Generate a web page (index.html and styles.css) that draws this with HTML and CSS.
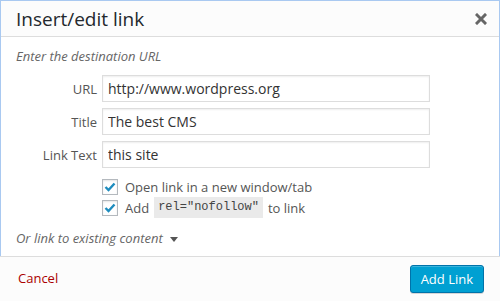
FILE: index.html
```html
<!DOCTYPE html>
<html lang="en">
<head>
    <meta charset="UTF-8">
    <title>Insert/edit link</title>
    <link rel="stylesheet" href="styles.css">
</head>
<body>
    <div class="link-modal">
        <div class="modal-main">
            <div class="modal-header">
                <h1 class="modal-title">Insert/edit link</h1>
                <button class="close-button" aria-label="Close">
                    <svg width="12" height="12" viewBox="0 0 12 12">
                        <path d="M2 2 L10 10 M10 2 L2 10" stroke="#666" stroke-width="3" stroke-linecap="square"/>
                    </svg>
                </button>
            </div>

            <div class="modal-body">
                <p class="howto">Enter the destination URL</p>

                <div class="field-row">
                    <label class="field-label">URL</label>
                    <input class="field-input" type="text" value="http://www.wordpress.org">
                </div>
                <div class="field-row">
                    <label class="field-label">Title</label>
                    <input class="field-input" type="text" value="The best CMS">
                </div>
                <div class="field-row">
                    <label class="field-label">Link Text</label>
                    <input class="field-input" type="text" value="this site">
                </div>

                <div class="options">
                    <label class="check-row">
                        <span class="checkbox"><svg width="12" height="10" viewBox="0 0 12 10"><path d="M1.5 5 L4.5 8 L10.5 1.5" fill="none" stroke="#1e8cbe" stroke-width="2.4"/></svg></span>
                        Open link in a new window/tab
                    </label>
                    <label class="check-row">
                        <span class="checkbox"><svg width="12" height="10" viewBox="0 0 12 10"><path d="M1.5 5 L4.5 8 L10.5 1.5" fill="none" stroke="#1e8cbe" stroke-width="2.4"/></svg></span>
                        Add <code class="code">rel="nofollow"</code> to link
                    </label>
                </div>

                <p class="toggle-existing">Or link to existing content <span class="arrow"></span></p>
            </div>
        </div>

        <div class="modal-footer">
            <a class="cancel-link" href="#">Cancel</a>
            <button class="submit-button">Add Link</button>
        </div>
    </div>
</body>
</html>
```

FILE: styles.css
```css
body {
    margin: 0;
    font-family: "Open Sans", "Liberation Sans", sans-serif;
    color: #444;
    background: #fff;
}

.link-modal {
    width: 500px;
    height: 301px;
    display: flex;
    flex-direction: column;
    box-sizing: border-box;
}

.modal-main {
    border: 1px solid #a9c9f1;
    border-bottom: none;
}

.modal-header {
    height: 35px;
    display: flex;
    align-items: center;
    justify-content: space-between;
    padding: 0 11px 0 15px;
    background-color: #fcfcfc;
    border-bottom: 1px solid #dddddd;
}

.modal-title {
    margin: 0;
    font-size: 19px;
    font-weight: 400;
    color: #23282d;
}

.close-button {
    background: none;
    border: none;
    padding: 0;
    width: 14px;
    height: 14px;
    display: flex;
    align-items: center;
    justify-content: center;
    cursor: pointer;
}

.modal-body {
    height: 219px;
    box-sizing: border-box;
    padding: 10px 15px 0;
    background: #fff;
}

.howto {
    margin: 0 0 10px;
    font-size: 13px;
    font-style: italic;
    color: #666;
    line-height: 18px;
}

.field-row {
    display: flex;
    align-items: center;
    margin-bottom: 6px;
}

.field-label {
    width: 81px;
    text-align: right;
    padding-right: 5px;
    font-size: 13px;
    color: #555;
}

.field-input {
    width: 328px;
    height: 27px;
    box-sizing: border-box;
    border: 1px solid #dddddd;
    padding: 0 5px;
    font-family: "Open Sans", "Liberation Sans", sans-serif;
    font-size: 14px;
    color: #333;
    box-shadow: inset 0 1px 2px rgba(0, 0, 0, 0.07);
    outline: none;
}

.options {
    padding-left: 86px;
    margin-top: 8px;
}

.check-row {
    display: flex;
    align-items: center;
    height: 21px;
    font-size: 13px;
    color: #555;
}

.checkbox {
    width: 14px;
    height: 14px;
    border: 1px solid #b4b9be;
    background: #fff;
    box-shadow: inset 0 1px 2px rgba(0, 0, 0, 0.1);
    display: flex;
    align-items: center;
    justify-content: center;
    margin-right: 7px;
}

.code {
    font-family: "Liberation Mono", "DejaVu Sans Mono", monospace;
    font-size: 12px;
    background: #eaeaea;
    color: #444;
    padding: 3px 4px 4px;
    margin: 0 5px 0 5px;
}

.toggle-existing {
    margin: 11px 0 0;
    font-size: 13px;
    font-style: italic;
    color: #666;
}

.arrow {
    display: inline-block;
    width: 0;
    height: 0;
    border-left: 4px solid transparent;
    border-right: 4px solid transparent;
    border-top: 5px solid #555;
    margin-left: 4px;
    vertical-align: middle;
}

.modal-footer {
    flex: 1;
    display: flex;
    align-items: center;
    justify-content: space-between;
    padding: 0 16px 0 18px;
    background-color: #fcfcfc;
    border-top: 1px solid #dddddd;
}

.cancel-link {
    font-size: 13px;
    color: #a00;
    text-decoration: none;
    margin-bottom: 3px;
}

.submit-button {
    height: 28px;
    padding: 0 10px;
    font-family: "Open Sans", "Liberation Sans", sans-serif;
    font-size: 13px;
    color: #fff;
    background-color: #00a0d2;
    border: 1px solid #0073aa;
    border-radius: 3px;
    box-shadow: inset 0 1px 0 rgba(120, 200, 230, 0.5), 0 1px 0 rgba(0, 0, 0, 0.15);
    cursor: pointer;
}
```
